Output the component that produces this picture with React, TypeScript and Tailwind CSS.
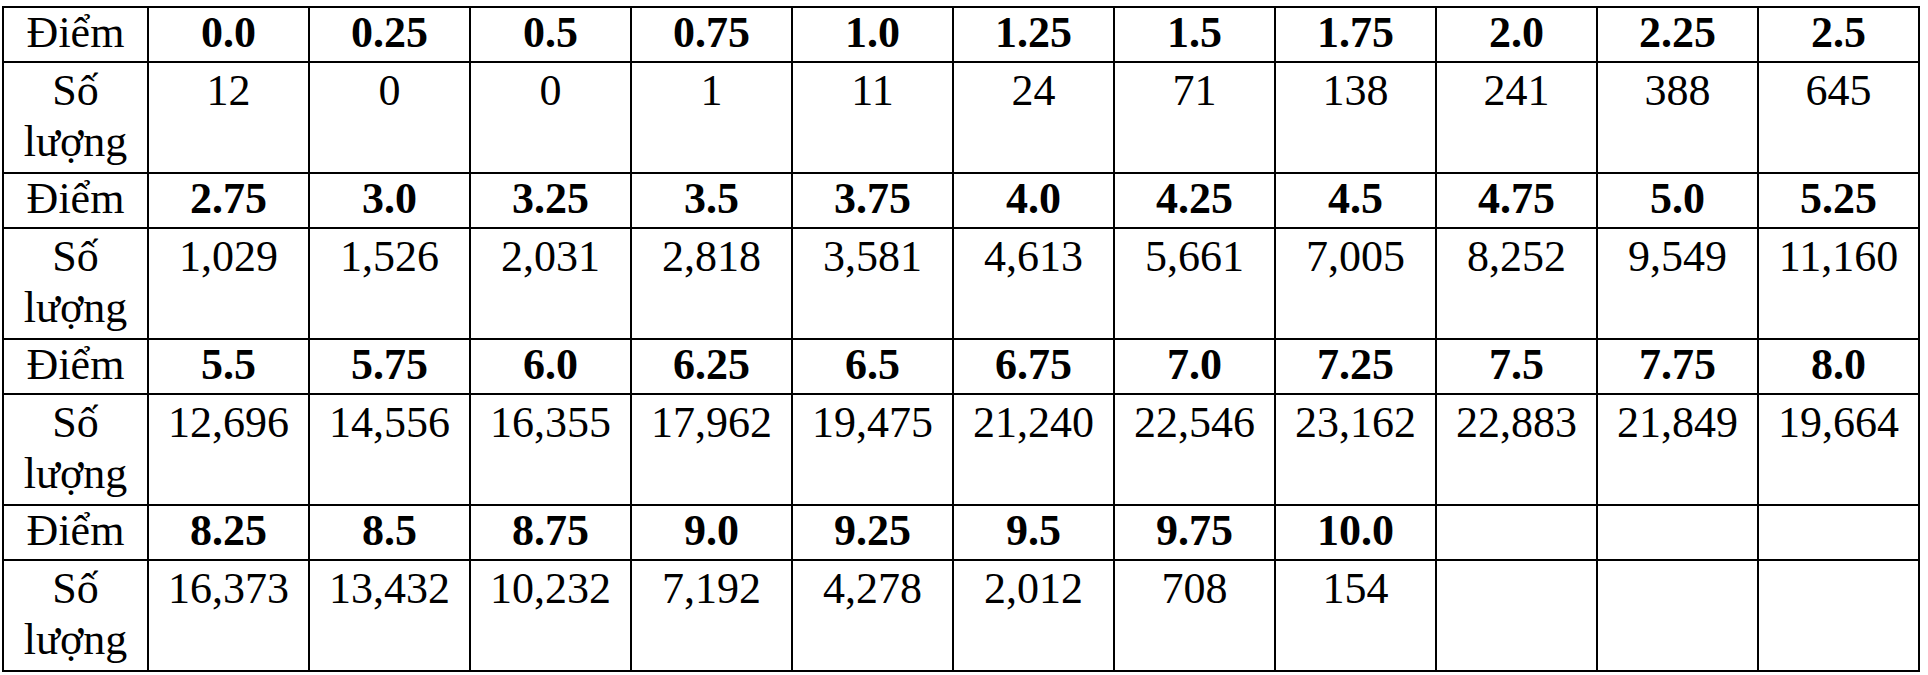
const groups = [
  {
    scores: ["0.0", "0.25", "0.5", "0.75", "1.0", "1.25", "1.5", "1.75", "2.0", "2.25", "2.5"],
    counts: ["12", "0", "0", "1", "11", "24", "71", "138", "241", "388", "645"],
  },
  {
    scores: ["2.75", "3.0", "3.25", "3.5", "3.75", "4.0", "4.25", "4.5", "4.75", "5.0", "5.25"],
    counts: ["1,029", "1,526", "2,031", "2,818", "3,581", "4,613", "5,661", "7,005", "8,252", "9,549", "11,160"],
  },
  {
    scores: ["5.5", "5.75", "6.0", "6.25", "6.5", "6.75", "7.0", "7.25", "7.5", "7.75", "8.0"],
    counts: ["12,696", "14,556", "16,355", "17,962", "19,475", "21,240", "22,546", "23,162", "22,883", "21,849", "19,664"],
  },
  {
    scores: ["8.25", "8.5", "8.75", "9.0", "9.25", "9.5", "9.75", "10.0", "", "", ""],
    counts: ["16,373", "13,432", "10,232", "7,192", "4,278", "2,012", "708", "154", "", "", ""],
  },
];

export default function App() {
  return (
    <div className="bg-white w-[1928px] h-[675px] pt-[6px] pl-[2px] font-['Liberation_Serif','Times_New_Roman',serif] text-[44px] leading-[50px] text-black">
      <table className="table-fixed border-collapse w-[1917px]">
        <colgroup>
          <col className="w-[145px]" />
          {groups[0].scores.map((_, i) => (
            <col key={i} className="w-[161px]" />
          ))}
        </colgroup>
        <tbody>
          {groups.map((g, gi) => [
            <tr key={`s${gi}`} className="h-[55px]">
              <td className="border-2 border-black p-0 text-center align-top">Điểm</td>
              {g.scores.map((s, i) => (
                <td key={i} className="border-2 border-black p-0 text-center align-top font-bold">
                  {s}
                </td>
              ))}
            </tr>,
            <tr key={`c${gi}`} className="h-[111px]">
              <td className="border-2 border-black px-0 pt-[2px] text-center align-top leading-[51px]">
                Số lượng
              </td>
              {g.counts.map((c, i) => (
                <td key={i} className="border-2 border-black px-0 pt-[2px] text-center align-top leading-[51px]">
                  {c}
                </td>
              ))}
            </tr>,
          ])}
        </tbody>
      </table>
    </div>
  );
}
